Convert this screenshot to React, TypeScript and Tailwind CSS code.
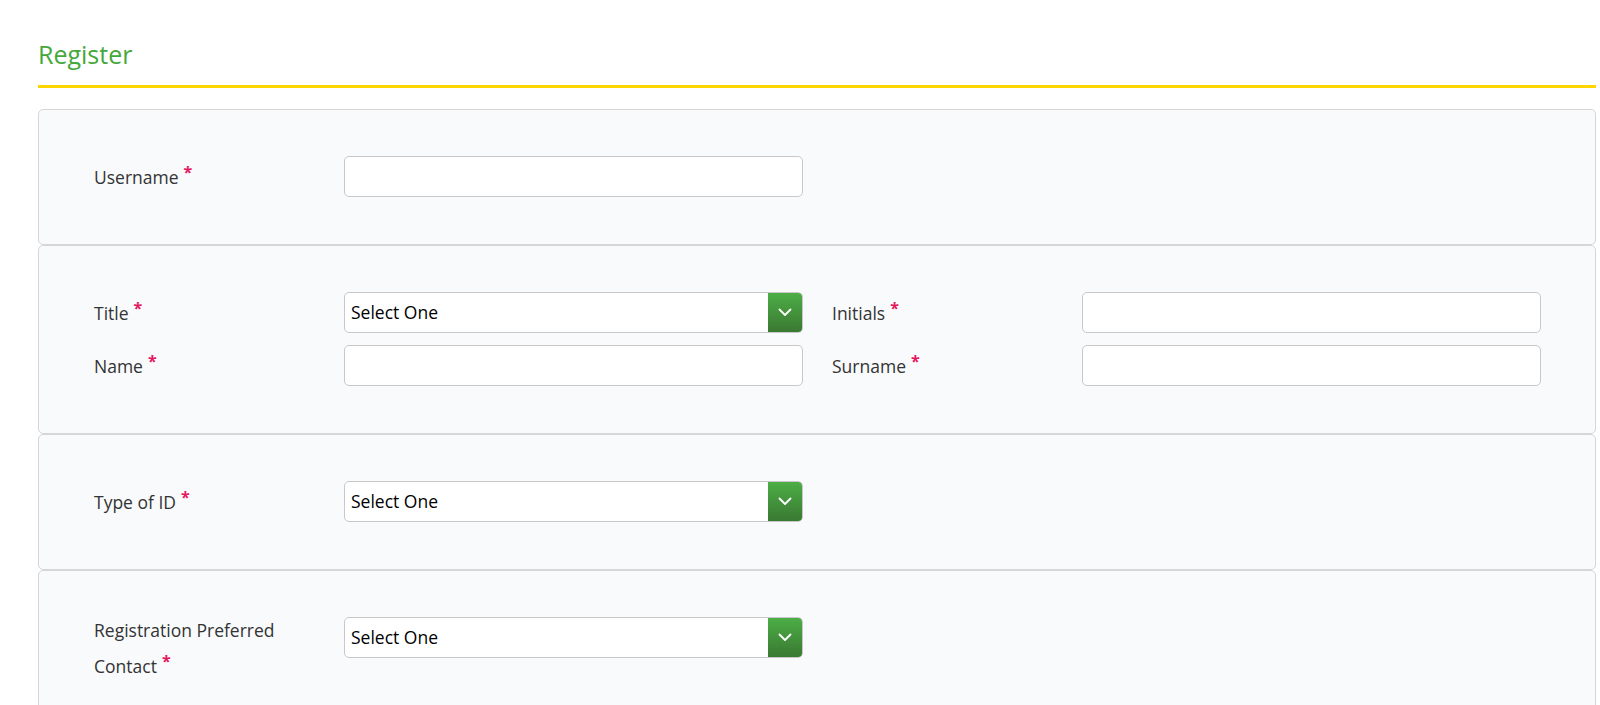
import React from "react";

const font = { fontFamily: '"Open Sans", "Noto Sans", sans-serif' };

const Req = () => (
  <span className="ml-[5px] inline-block align-top text-[16px] leading-[16px] font-bold text-[#e4185f] relative top-[5px]">*</span>
);

const Label = ({ children }: { children: React.ReactNode }) => (
  <label className="w-[250px] shrink-0 text-[17.5px] leading-[36px] text-[#333]">
    {children}
    <Req />
  </label>
);

const TextInput = () => (
  <input
    type="text"
    className="w-[459px] h-[41px] rounded-[5px] border border-[#c8c8c8] bg-white px-2 outline-none"
  />
);

const SelectBox = () => (
  <div className="flex w-[459px] h-[41px] rounded-[5px] border border-[#c8c8c8] bg-white overflow-hidden">
    <div className="flex-1 flex items-center px-[6px] text-[17.5px] text-black">Select One</div>
    <div className="w-[34px] flex items-center justify-center bg-gradient-to-b from-[#4cae46] to-[#3a7932]">
      <svg width="14" height="9" viewBox="0 0 14 9" fill="none">
        <path d="M1.5 1.5 L7 7 L12.5 1.5" stroke="white" strokeWidth="1.8" strokeLinecap="round" strokeLinejoin="round" />
      </svg>
    </div>
  </div>
);

const Panel = ({ children }: { children: React.ReactNode }) => (
  <div className="rounded-[5px] border border-[#d6d6d6] bg-[#f9fafc] pl-[55px] pt-[46px] pb-[47px] flex flex-col gap-3">
    {children}
  </div>
);

export default function App() {
  return (
    <div className="bg-white min-h-screen pl-[38px] pr-[4px]" style={font}>
      <h1 className="pt-[38px] pb-[15px] text-[25px] leading-[32px] text-[#45a83a] border-b-[3px] border-[#ffd500]">
        Register
      </h1>
      <div className="mt-[21px] flex flex-col">
        <Panel>
          <div className="flex items-center">
            <Label>Username</Label>
            <TextInput />
          </div>
        </Panel>
        <Panel>
          <div className="flex items-center">
            <Label>Title</Label>
            <SelectBox />
            <div className="w-[29px]" />
            <Label>Initials</Label>
            <TextInput />
          </div>
          <div className="flex items-center">
            <Label>Name</Label>
            <TextInput />
            <div className="w-[29px]" />
            <Label>Surname</Label>
            <TextInput />
          </div>
        </Panel>
        <Panel>
          <div className="flex items-center">
            <Label>Type of ID</Label>
            <SelectBox />
          </div>
        </Panel>
        <Panel>
          <div className="flex items-start">
            <label className="w-[250px] shrink-0 text-[17.5px] leading-[36px] text-[#333] -mt-[5px]">
              Registration Preferred
              <br />
              Contact
              <Req />
            </label>
            <SelectBox />
          </div>
        </Panel>
      </div>
    </div>
  );
}
